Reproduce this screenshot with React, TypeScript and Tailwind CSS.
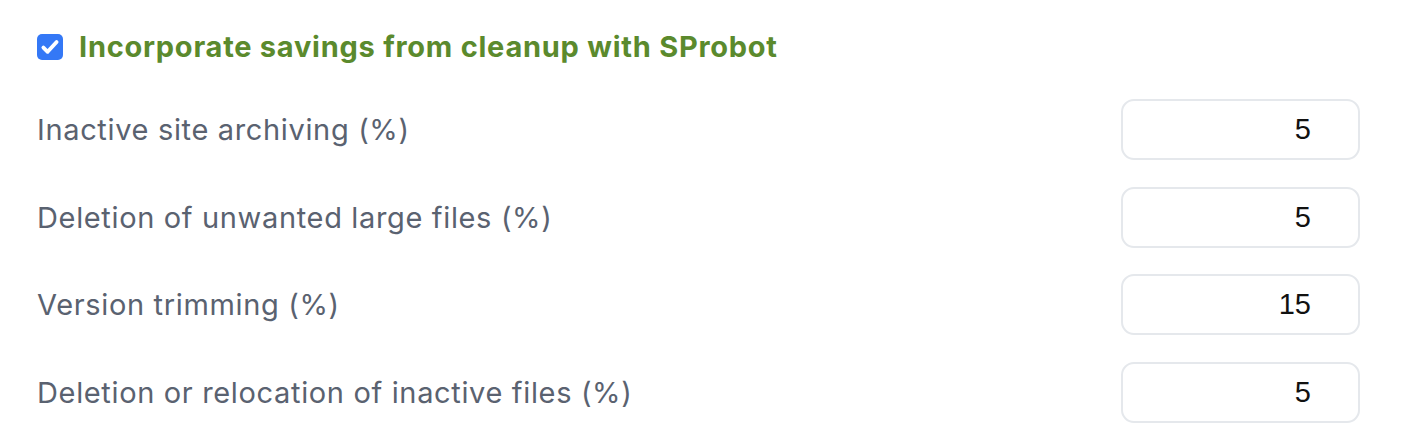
import { useState } from "react";

// Cleanup savings settings — checkbox header with four percentage inputs.

interface Field {
  label: string;
  value: number;
}

const FIELDS: Field[] = [
  { label: "Inactive site archiving (%)", value: 5 },
  { label: "Deletion of unwanted large files (%)", value: 5 },
  { label: "Version trimming (%)", value: 15 },
  { label: "Deletion or relocation of inactive files (%)", value: 5 },
];

function Check({ on, onToggle }: { on: boolean; onToggle: () => void }) {
  return (
    <button
      onClick={onToggle}
      className={`flex h-[26px] w-[26px] shrink-0 items-center justify-center rounded-[5px] ${
        on ? "bg-[#3478f6]" : "border-2 border-[#9ca3af] bg-white"
      }`}
    >
      {on && (
        <svg viewBox="0 0 24 24" className="h-[22px] w-[22px]" fill="none">
          <path
            d="M4.8 12.6l4.6 4.6L19.2 6.6"
            stroke="white"
            strokeWidth="4.2"
            strokeLinecap="round"
            strokeLinejoin="round"
          />
        </svg>
      )}
    </button>
  );
}

export default function App() {
  const [on, setOn] = useState(true);
  const [vals, setVals] = useState(FIELDS.map((f) => String(f.value)));

  return (
    <div className="min-h-screen bg-white pl-[37px] pr-[44px] pt-[33px] font-['Inter',sans-serif]">
      <div className="flex h-[27px] items-center gap-[16px]">
        <Check on={on} onToggle={() => setOn(!on)} />
        <span className="text-[29px] font-bold leading-none tracking-[0.75px] text-[#5b8a2d]">
          Incorporate savings from cleanup with SProbot
        </span>
      </div>

      <div className="mt-[39px] flex flex-col gap-[26.5px]">
        {FIELDS.map((f, i) => (
          <div key={f.label} className="flex h-[61px] items-center justify-between">
            <span className="text-[29px] leading-none tracking-[0.65px] text-[#5a6270]">
              {f.label}
            </span>
            <input
              value={vals[i]}
              onChange={(e) => {
                const next = [...vals];
                next[i] = e.target.value;
                setVals(next);
              }}
              className="h-[61px] w-[239px] rounded-[13px] border-2 border-[#e5e8ec] bg-white pr-[47px] text-right font-['Liberation_Sans',Arial,sans-serif] text-[29px] text-[#111] outline-none"
            />
          </div>
        ))}
      </div>
    </div>
  );
}
